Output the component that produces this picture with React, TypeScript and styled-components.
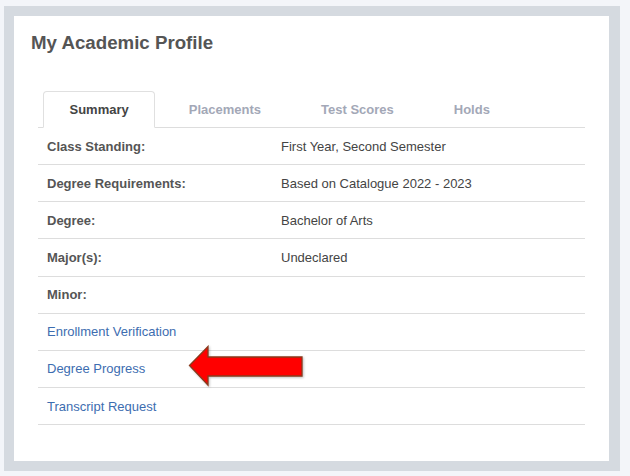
import React from "react";
import styled, { createGlobalStyle } from "styled-components";

const Global = createGlobalStyle`
  html, body {
    margin: 0;
    padding: 0;
    background: #f3f5f9;
    font-family: "Liberation Sans", Arial, sans-serif;
  }
`;

const Page = styled.div`
  padding: 6px 10px 5px 4px;
`;

const Frame = styled.div`
  background: #d5dae0;
  padding: 10px 11px 10px 10px;
`;

const Panel = styled.div`
  background: #ffffff;
  height: 445px;
  box-sizing: border-box;
  padding: 16px 24px 0 17px;
`;

const Title = styled.h2`
  margin: 0;
  font-size: 18.7px;
  font-weight: bold;
  color: #555555;
  line-height: 21px;
`;

const Body = styled.div`
  margin: 38px 0 0 7px;
`;

const TabList = styled.div`
  display: flex;
  gap: 7px;
  padding-left: 5px;
  border-bottom: 1px solid #dddddd;
  height: 36px;
`;

const Tab = styled.div<{ $active?: boolean }>`
  box-sizing: border-box;
  height: 37px;
  padding: 0 25.5px;
  display: flex;
  align-items: center;
  font-size: 13px;
  font-weight: bold;
  color: ${(p) => (p.$active ? "#444444" : "#a3a8b7")};
  background: ${(p) => (p.$active ? "#ffffff" : "transparent")};
  border: 1px solid ${(p) => (p.$active ? "#e0e0e0" : "transparent")};
  border-bottom-color: transparent;
  border-radius: 4px 4px 0 0;
`;

const Row = styled.div`
  position: relative;
  display: grid;
  grid-template-columns: 234px 1fr;
  height: 36.15px;
  align-items: center;
  border-bottom: 1px solid #dddddd;
  padding-left: 9px;
  font-size: 13px;
`;

const Label = styled.span`
  font-weight: bold;
  color: #555555;
`;

const Value = styled.span`
  color: #444444;
`;

const Link = styled.a`
  color: #3d6db0;
  text-decoration: none;
  cursor: pointer;
`;

const Arrow = styled.svg`
  position: absolute;
  left: 150px;
  top: -6px;
  filter: drop-shadow(1px 1px 1px rgba(0, 0, 0, 0.25));
`;

const data: [string, string][] = [
  ["Class Standing:", "First Year, Second Semester"],
  ["Degree Requirements:", "Based on Catalogue 2022 - 2023"],
  ["Degree:", "Bachelor of Arts"],
  ["Major(s):", "Undeclared"],
  ["Minor:", ""],
];

const links = ["Enrollment Verification", "Degree Progress", "Transcript Request"];

export default function App() {
  return (
    <>
      <Global />
      <Page>
        <Frame>
          <Panel>
            <Title>My Academic Profile</Title>
            <Body>
              <TabList>
                <Tab $active>Summary</Tab>
                <Tab>Placements</Tab>
                <Tab>Test Scores</Tab>
                <Tab>Holds</Tab>
              </TabList>
              {data.map(([l, v]) => (
                <Row key={l}>
                  <Label>{l}</Label>
                  <Value>{v}</Value>
                </Row>
              ))}
              {links.map((l) => (
                <Row key={l}>
                  <Link>{l}</Link>
                  {l === "Degree Progress" && (
                    <Arrow width="118" height="44" viewBox="0 0 118 44">
                      <polygon
                        points="1.5,20.5 20,1.5 20,12 114,12 114,31 20,31 20,40"
                        fill="#ff0000"
                        stroke="#8a3a1c"
                        strokeWidth="1.3"
                        strokeLinejoin="miter"
                      />
                    </Arrow>
                  )}
                </Row>
              ))}
            </Body>
          </Panel>
        </Frame>
      </Page>
    </>
  );
}
